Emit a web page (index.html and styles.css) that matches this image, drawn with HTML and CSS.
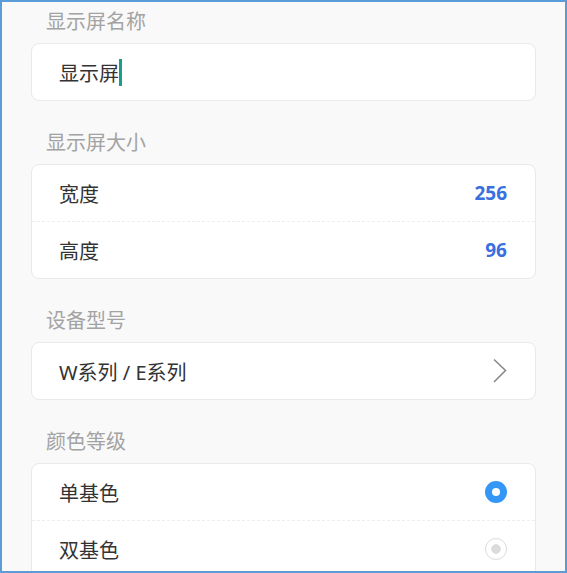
FILE: index.html
```html
<!DOCTYPE html>
<html lang="zh">
<head>
<meta charset="utf-8">
<link rel="stylesheet" href="styles.css">
</head>
<body>
<div class="frame">
  <section class="section">
    <div class="label">显示屏名称</div>
    <div class="card">
      <div class="row"><span class="text">显示屏</span><span class="caret"></span></div>
    </div>
  </section>
  <section class="section">
    <div class="label">显示屏大小</div>
    <div class="card">
      <div class="row"><span class="text">宽度</span><span class="value">256</span></div>
      <div class="row"><span class="text">高度</span><span class="value">96</span></div>
    </div>
  </section>
  <section class="section">
    <div class="label">设备型号</div>
    <div class="card">
      <div class="row"><span class="text">W系列 / E系列</span>
        <svg class="chevron" width="16" height="26" viewBox="0 0 16 26"><path d="M2 1.5 L13.5 12.5 L2 24" fill="none" stroke="#8a8a8a" stroke-width="1.6"/></svg>
      </div>
    </div>
  </section>
  <section class="section">
    <div class="label">颜色等级</div>
    <div class="card">
      <div class="row"><span class="text">单基色</span><span class="radio on"></span></div>
      <div class="row"><span class="text">双基色</span><span class="radio off"></span></div>
    </div>
  </section>
</div>
</body>
</html>
```
FILE: styles.css
```css
html, body {
  margin: 0;
  padding: 0;
}
body {
  font-family: "Noto Sans", "Noto Sans CJK SC", sans-serif;
}
.frame {
  width: 567px;
  height: 573px;
  box-sizing: border-box;
  border: 2px solid #5b9bd8;
  background: #f9f9f9;
  overflow: hidden;
  padding: 0 29px;
}
.section {
  margin-bottom: 21px;
}
.section:first-child {
  margin-top: -1px;
}
.label {
  height: 42px;
  line-height: 42px;
  padding-left: 15px;
  font-size: 20px;
  color: #a3a3a3;
}
.card {
  background: #fff;
  border: 1px solid #e9e9e9;
  border-radius: 8px;
}
.row {
  height: 56px;
  display: flex;
  align-items: center;
  padding: 0 28px 0 27px;
  font-size: 20px;
  color: #333;
}
.row + .row {
  border-top: 1px dashed #eeeeee;
}
.text {
  flex: 0 0 auto;
}
.caret {
  width: 2.5px;
  height: 27px;
  background: #1a9e89;
  margin-left: 0;
}
.value {
  margin-left: auto;
  font-weight: bold;
  color: #3a6fe0;
  font-size: 19px;
}
.chevron {
  margin-left: auto;
  margin-right: -1px;
}
.radio {
  margin-left: auto;
  width: 22px;
  height: 22px;
  box-sizing: border-box;
  border-radius: 50%;
}
.radio.on {
  border: 7px solid #3497f7;
  background: #fff;
}
.radio.off {
  border: 1px solid #dcdcdc;
  background: radial-gradient(circle, #dcdcdc 0 4.5px, #fff 5px);
}
```
